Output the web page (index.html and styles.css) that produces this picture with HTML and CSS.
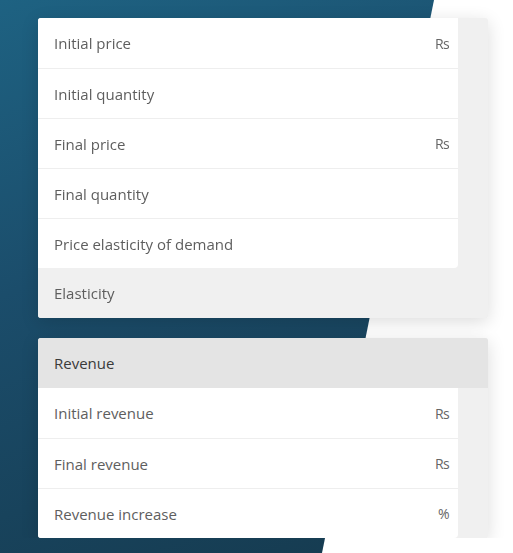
FILE: index.html
```html
<!DOCTYPE html>
<html lang="en">
<head>
<meta charset="utf-8">
<title>Price elasticity of demand</title>
<link rel="stylesheet" href="styles.css">
</head>
<body>
<div class="backdrop"></div>
<main class="page">
  <section class="card">
    <div class="inputs">
      <div class="row"><span class="label">Initial price</span><span class="unit">Rs</span></div>
      <div class="row"><span class="label">Initial quantity</span></div>
      <div class="row"><span class="label">Final price</span><span class="unit">Rs</span></div>
      <div class="row"><span class="label">Final quantity</span></div>
      <div class="row"><span class="label">Price elasticity of demand</span></div>
    </div>
    <div class="row section-foot"><span class="label">Elasticity</span></div>
  </section>
  <section class="card">
    <div class="row section-head"><span class="label">Revenue</span></div>
    <div class="inputs">
      <div class="row"><span class="label">Initial revenue</span><span class="unit">Rs</span></div>
      <div class="row"><span class="label">Final revenue</span><span class="unit">Rs</span></div>
      <div class="row"><span class="label">Revenue increase</span><span class="unit">%</span></div>
    </div>
  </section>
</main>
</body>
</html>
```
FILE: styles.css
```css
html, body {
  margin: 0;
  padding: 0;
  background: #ffffff;
  font-family: "Open Sans", "Liberation Sans", sans-serif;
}
.backdrop {
  position: fixed;
  inset: 0;
  background: linear-gradient(160deg, #1e6282 0%, #1b4d6b 40%, #15394d 100%);
  clip-path: polygon(0 0, 434px 0, 322px 553px, 0 553px);
  z-index: 0;
}
.page {
  position: relative;
  z-index: 1;
  padding: 18px 0 0 38px;
  display: flex;
  flex-direction: column;
  gap: 20px;
}
.card {
  width: 450px;
  background: #f0f0f0;
  border-radius: 3px;
  box-shadow: 0 4px 18px rgba(0, 0, 0, 0.14);
  overflow: hidden;
}
.inputs {
  width: 420px;
  background: #ffffff;
  border-radius: 0 0 4px 0;
}
.row {
  height: 50px;
  box-sizing: border-box;
  display: flex;
  align-items: center;
  justify-content: space-between;
  padding: 0 9px 0 16px;
  font-size: 15px;
  color: #5e5e5e;
}
.inputs .row + .row {
  border-top: 1px solid #eeeeee;
}
.section-foot {
  background: #f0f0f0;
}
.section-head {
  background: #e4e4e4;
  color: #3a3a3a;
}
.unit {
  color: #666666;
  font-size: 14px;
  letter-spacing: -0.6px;
}
```
